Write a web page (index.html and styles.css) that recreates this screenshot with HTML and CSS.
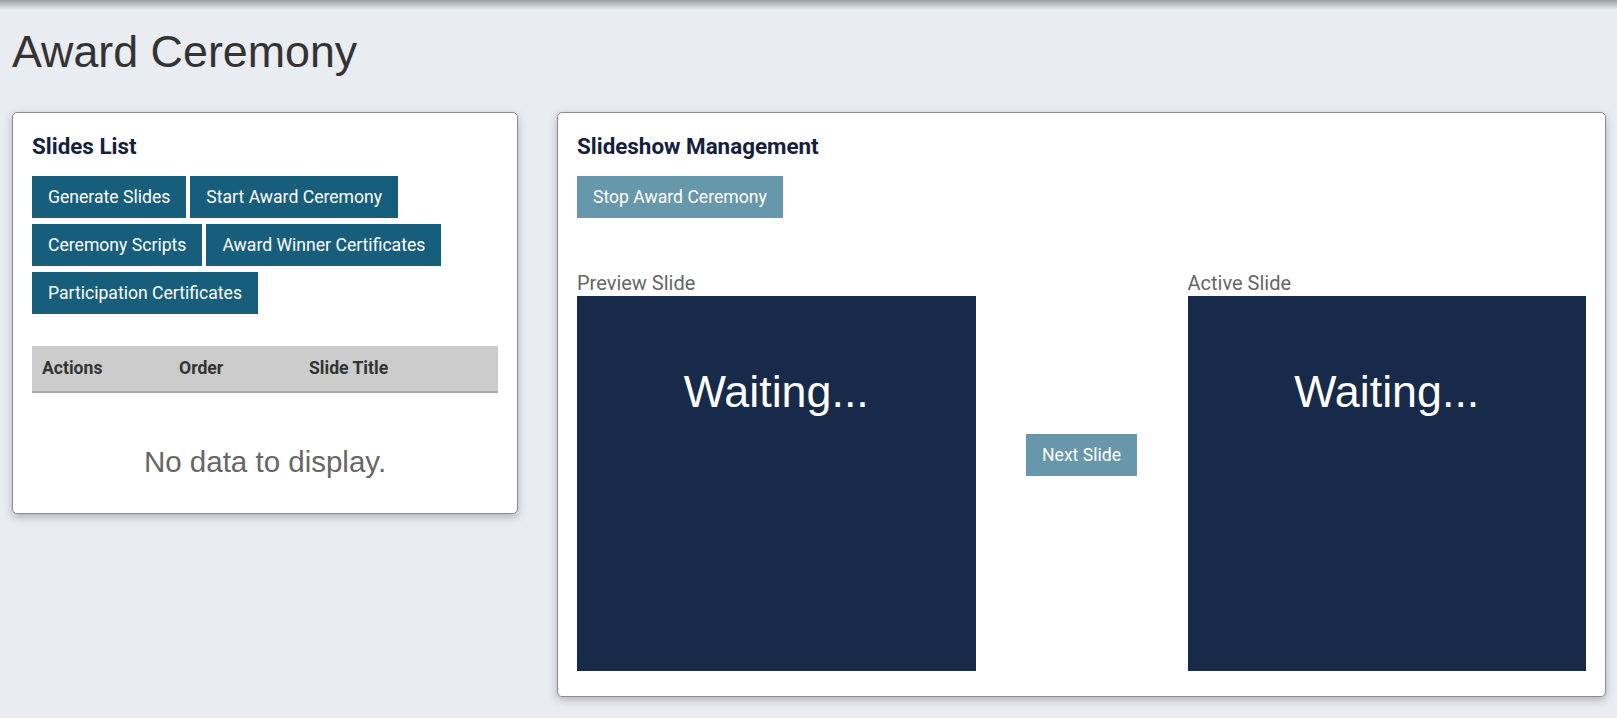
FILE: index.html
```html
<!DOCTYPE html>
<html>
	<head>
		<meta charset="UTF-8"/>
		<meta name="viewport" content="width=device-width, initial-scale=1"/>
		<title>Award Ceremony</title>
		<link rel="stylesheet" href="styles.css">
	</head>
	<body>
		<h1 class="page-title">Award Ceremony</h1>

		<div class="layout">
			<div class="card slides-list">
				<h2 class="card-title">Slides List</h2>

				<div class="btn-group">
					<button class="btn" type="button">Generate Slides</button>
					<button class="btn" type="button">Start Award Ceremony</button>
					<button class="btn" type="button">Ceremony Scripts</button>
					<button class="btn" type="button">Award Winner Certificates</button>
					<button class="btn" type="button">Participation Certificates</button>
				</div>

				<table class="grid">
					<thead>
						<tr>
							<th class="col-actions">Actions</th>
							<th class="col-order">Order</th>
							<th>Slide Title</th>
						</tr>
					</thead>
					<tbody>
						<tr>
							<td class="grid-empty" colspan="3">No data to display.</td>
						</tr>
					</tbody>
				</table>
			</div>

			<div class="card slideshow">
				<h2 class="card-title">Slideshow Management</h2>

				<div class="btn-group">
					<button class="btn" type="button" disabled>Stop Award Ceremony</button>
				</div>

				<div class="slides">
					<div class="slide-cell">
						<span class="slide-label">Preview Slide</span>
						<div class="slide">Waiting...</div>
					</div>

					<div class="slide-controls">
						<button class="btn" type="button" disabled>Next Slide</button>
					</div>

					<div class="slide-cell">
						<span class="slide-label">Active Slide</span>
						<div class="slide">Waiting...</div>
					</div>
				</div>
			</div>
		</div>
	</body>
</html>
```

FILE: styles.css
```css
html, body {
	margin: 0;
	padding: 0;
}

body {
	font-family: Roboto, "Noto Sans", sans-serif;
	font-size: 17.6px;
	color: #333333;
	background: #e9ecf1 linear-gradient(#999ea6, rgba(233, 236, 241, 0) 10px) no-repeat;
	min-height: 100vh;
}

.page-title {
	font-family: "Liberation Sans", Arial, sans-serif;
	font-weight: normal;
	font-size: 44.8px;
	line-height: normal;
	color: #333333;
	margin: 0;
	padding: 26px 12px 35px 12px;
}

.layout {
	display: grid;
	grid-template-columns: 506px 1fr;
	column-gap: 39px;
	align-items: start;
	padding: 0 11px 0 12px;
}

.card {
	background: white;
	border: 1px solid #8c8c8c;
	border-radius: 5px;
	box-shadow: 0 3px 8px rgba(0, 0, 0, 0.25);
	padding: 20px 19px;
}

.card-title {
	font-size: 22.4px;
	font-weight: bold;
	line-height: 27px;
	color: #14213d;
	margin: 0 0 16px 0;
}

.btn-group {
	display: flex;
	flex-wrap: wrap;
	gap: 6px 4px;
}

.btn {
	font-family: Roboto, "Noto Sans", sans-serif;
	font-size: 17.6px;
	line-height: 26px;
	padding: 8px 16px;
	margin: 0;
	border: none;
	border-radius: 0;
	background: #175e7c;
	color: white;
	cursor: pointer;
}

.btn:disabled {
	background: #6797aa;
	cursor: default;
}

/* slides table */

.grid {
	width: 100%;
	border-collapse: collapse;
	margin-top: 32px;
}

.grid th {
	background: #cccccc;
	border-bottom: 2px solid #aaaaaa;
	text-align: left;
	font-weight: bold;
	line-height: 25px;
	padding: 10px;
	color: #333333;
}

.grid .col-actions {
	width: 117px;
}

.grid .col-order {
	width: 110px;
}

.grid-empty {
	font-family: "Liberation Sans", Arial, sans-serif;
	font-size: 29.5px;
	line-height: normal;
	color: #666666;
	text-align: center;
	padding: 52px 0 14px 0;
}

/* slideshow */

.slideshow {
	padding-bottom: 25px;
}

.slides {
	display: grid;
	grid-template-columns: 1fr 212px 1fr;
	margin-top: 52px;
}

.slide-label {
	display: block;
	font-size: 20px;
	line-height: 26px;
	color: #666666;
}

.slide {
	background: #172a49;
	color: white;
	height: 375px;
	box-sizing: border-box;
	padding-top: 70px;
	text-align: center;
	font-family: "Liberation Sans", Arial, sans-serif;
	font-size: 44.8px;
	line-height: normal;
}

.slide-controls {
	display: flex;
	justify-content: center;
	align-items: flex-start;
	padding-top: 164px;
}
```
